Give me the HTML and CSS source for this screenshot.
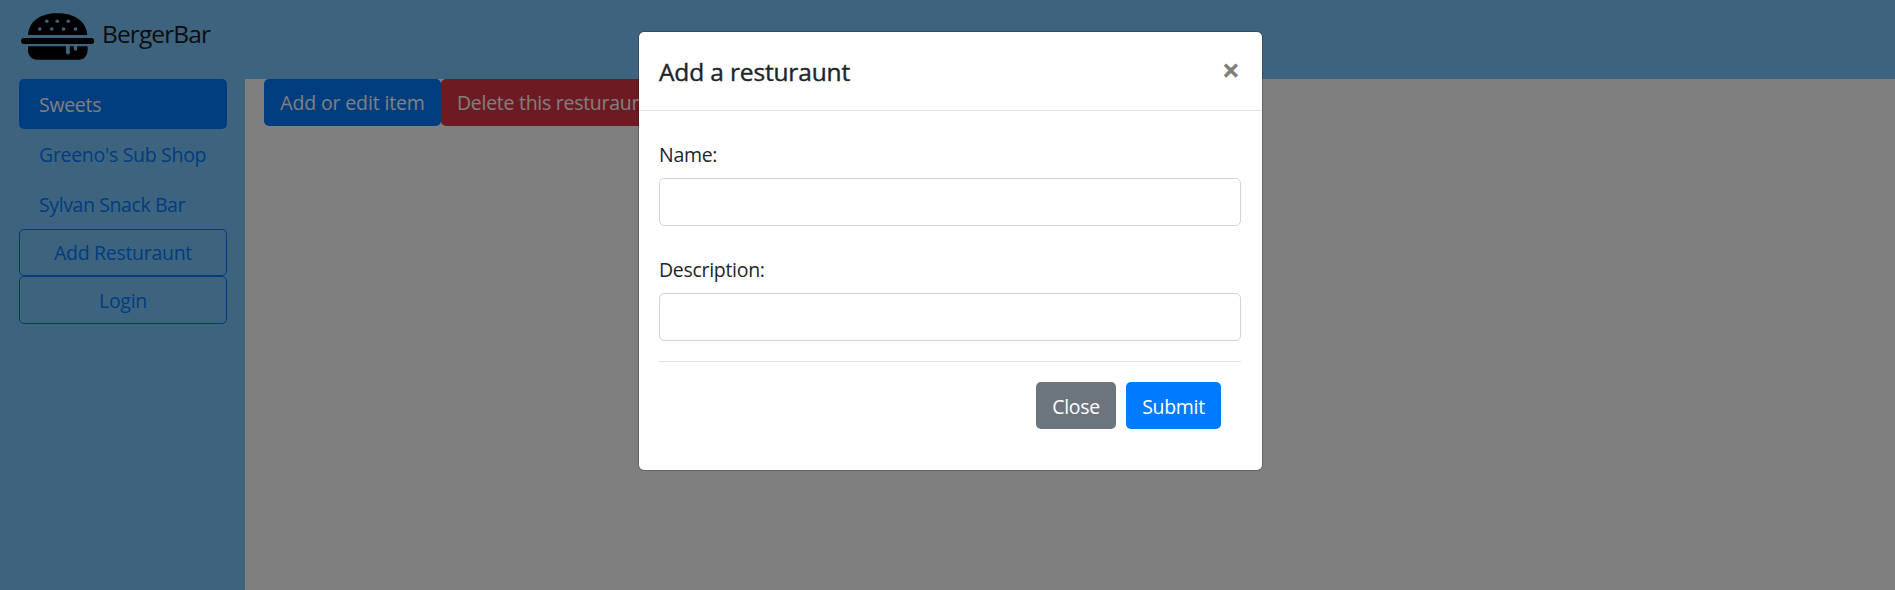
FILE: index.html
```
<!DOCTYPE html>
<html lang="en">
<head>
<meta charset="utf-8">
<title>BergerBar</title>
<link rel="stylesheet" href="styles.css">
</head>
<body>
<div class="page">
  <header class="navbar">
    <svg class="logo" width="75" height="50" viewBox="0 0 75 50" aria-hidden="true">
      <path d="M8 27C9 12.500 21 5.200 37.500 5.200S66 12.500 67.300 27Z"/>
      <rect x="1" y="30" width="73.200" height="6" rx="3"/>
      <path d="M8 38.300H46V44.500a1.800 1.800 0 0 0 3.800 0V38.300H53.800V41a1.700 1.700 0 0 0 3.400 0V38.300H67.600V42C67.600 47.500 64 51.800 59 51.800H17C12 51.800 8 47.500 8 42Z"/>
      <g class="seeds">
        <circle cx="26.800" cy="13.200" r="1.800"/><circle cx="37.300" cy="13.200" r="1.800"/><circle cx="48.200" cy="13.200" r="1.800"/>
        <circle cx="19.800" cy="21" r="1.800"/><circle cx="31.700" cy="21" r="1.800"/><circle cx="43.500" cy="21" r="1.800"/><circle cx="55.500" cy="21" r="1.800"/>
      </g>
    </svg>
    <span class="brand">BergerBar</span>
  </header>
  <div class="columns">
    <nav class="sidebar">
      <a class="pill active">Sweets</a>
      <a class="pill">Greeno's Sub Shop</a>
      <a class="pill sylvan">Sylvan Snack Bar</a>
      <button class="btn outline raised">Add Resturaunt</button>
      <button class="btn outline login">Login</button>
    </nav>
    <main class="content">
      <button class="btn primary raised edit">Add or edit item</button>
      <button class="btn danger raised">Delete this resturaunt</button>
    </main>
  </div>
</div>
<div class="backdrop">
  <section class="modal">
    <div class="modal-header">
      <h5 class="modal-title">Add a resturaunt</h5>
      <button class="close">×</button>
    </div>
    <form class="modal-body">
      <label class="label" for="name">Name:</label>
      <input class="field" id="name">
      <label class="label second" for="description">Description:</label>
      <input class="field" id="description">
      <div class="modal-footer">
        <button type="button" class="btn secondary">Close</button>
        <button type="button" class="btn primary submit">Submit</button>
      </div>
    </form>
  </section>
</div>
</body>
</html>
```
FILE: styles.css
```
* { box-sizing: border-box; }
body {
  margin: 0;
  height: 590px;
  overflow: hidden;
  font-family: "Open Sans", "Noto Sans", sans-serif;
  font-size: 19.5px;
  letter-spacing: -0.3px;
  line-height: 30px;
  color: #212529;
}
.page { height: 590px; display: flex; flex-direction: column; }
.navbar {
  height: 79px;
  flex: none;
  background: #7ac7ff;
  display: flex;
  align-items: flex-start;
  padding: 8px 20px;
}
.logo { overflow: visible; fill: #000; }
.seeds { fill: #7ac7ff; }
.brand { margin: 11px 0 0 7px; font-size: 24.5px; color: #1a1a1a; letter-spacing: -0.9px; }
.columns { display: flex; flex: 1; }
.sidebar {
  width: 245px;
  padding: 0 18px 0 19px;
  background: #7ac7ff;
  display: flex;
  flex-direction: column;
}
.pill { height: 50px; padding: 11px 20px; border-radius: 5px; color: #007bff; white-space: nowrap; }
.pill.active { background: #007bff; color: #fff; }
.sylvan { letter-spacing: -0.4px; }
.btn {
  height: 47px;
  padding: 2px 15px 0;
  border: 1px solid transparent;
  border-radius: 5px;
  font: inherit;
  letter-spacing: inherit;
  white-space: nowrap;
  background: none;
}
.raised { padding-top: 0; }
.outline { color: #007bff; border-color: #007bff; }
.login { height: 48px; }
.content { flex: 1; display: flex; align-items: flex-start; padding-left: 19px; background: #fff; }
.primary { background: #007bff; color: #fff; }
.danger { background: #dc3545; color: #fff; letter-spacing: -0.28px; }
.secondary { background: #6c757d; color: #fff; width: 80px; }
.edit { width: 177px; letter-spacing: -0.14px; }
.submit { width: 95px; }
.backdrop {
  position: absolute;
  inset: 0;
  background: rgba(0, 0, 0, .5);
  display: flex;
  justify-content: center;
  align-items: flex-start;
  padding: 31px 0 0 6px;
}
.modal {
  width: 625px;
  height: 440px;
  background: #fff;
  background-clip: padding-box;
  border: 1px solid rgba(0, 0, 0, .2);
  border-radius: 6px;
}
.modal-header {
  height: 79px;
  padding: 20px 22px 20px 20px;
  border-bottom: 1px solid #dee2e6;
  display: flex;
  justify-content: space-between;
}
.modal-title {
  margin: 0;
  font-size: 24.5px;
  font-weight: 500;
  letter-spacing: -0.15px;
  line-height: 40px;
  -webkit-text-stroke: .4px #212529;
}
.close {
  height: 35px;
  padding: 0;
  border: 0;
  background: none;
  font: 700 32px/30px "Open Sans", sans-serif;
  color: #7f7f7f;
}
.modal-body { padding: 29px 21px 0 20px; display: flex; flex-direction: column; }
.label { height: 38px; }
.second { margin-top: 29px; }
.field { height: 48px; border: 1px solid #ced4da; border-radius: 5px; width: 100%; padding: 0 15px; font: inherit; }
.modal-footer {
  margin-top: 20px;
  padding: 20px;
  border-top: 1px solid #dee2e6;
  display: flex;
  justify-content: flex-end;
  gap: 10px;
}
```
